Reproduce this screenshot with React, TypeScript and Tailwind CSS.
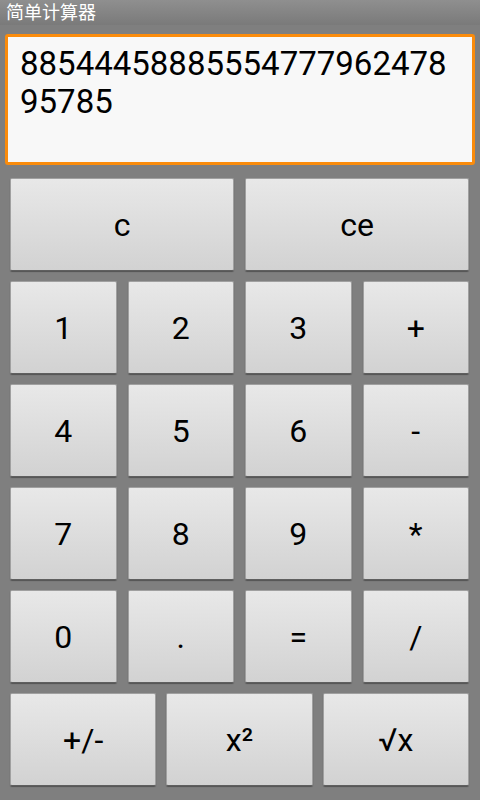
const rowFour = [
  ['1', '2', '3', '+'],
  ['4', '5', '6', '-'],
  ['7', '8', '9', '*'],
  ['0', '.', '=', '/']
]

function Key({ label }: { label: string }) {
  return (
    <button className="flex h-[93px] items-center justify-center rounded-[2px] border border-[#a0a0a0] border-b-[#5f5f5f] bg-gradient-to-b from-[#e8e8e8] via-[#dddddd] to-[#d2d2d2] text-[32px] text-black shadow-[0_1px_1px_rgba(0,0,0,0.35)]">
      {label}
    </button>
  )
}

export default function App() {
  const display = '8854445888555477796247895785'

  return (
    <div className="flex h-[800px] w-[480px] flex-col bg-[#7f7f7f] font-['Roboto','Noto_Sans_CJK_SC',sans-serif]">
      <div className="flex h-[25px] items-center bg-gradient-to-b from-[#8f8f8f] to-[#7a7a7a] px-[6px] text-[18px] leading-none text-white">
        简单计算器
      </div>

      <div className="mx-[5px] mt-[9px] h-[131px] rounded-[3px] border-[3px] border-[#fb8c0c] bg-[#f8f8f8] pl-[12px] pr-[20px] pt-[8px]">
        <div className="break-all text-[33px] leading-[38px] text-black">{display}</div>
      </div>

      <div className="mt-[13px] flex flex-col gap-[10px] pl-[10px] pr-[11px]">
        <div className="grid grid-cols-2 gap-[11px]">
          <Key label="c" />
          <Key label="ce" />
        </div>
        {rowFour.map((row) => (
          <div key={row[0]} className="grid grid-cols-4 gap-[11px]">
            {row.map((k) => (
              <Key key={k} label={k} />
            ))}
          </div>
        ))}
        <div className="grid grid-cols-3 gap-[10px]">
          <Key label="+/-" />
          <Key label="x²" />
          <Key label="√x" />
        </div>
      </div>
    </div>
  )
}
